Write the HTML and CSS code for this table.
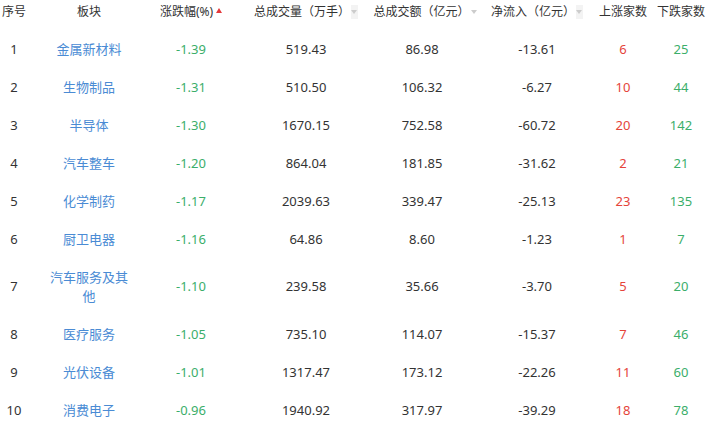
FILE: index.html
```html
<!DOCTYPE html>
<html lang="zh-CN">
<head>
<meta charset="utf-8">
<title>板块资金</title>
<link rel="stylesheet" href="styles.css">
</head>
<body>
<div class="table">
  <div class="row head">
    <div class="cell c0">序号</div>
    <div class="cell c1">板块</div>
    <div class="cell c2">涨跌幅(%)<span class="sort-up"></span></div>
    <div class="cell c3">总成交量（万手）<span class="sort-down"></span></div>
    <div class="cell c4">总成交额（亿元）<span class="sort-down"></span></div>
    <div class="cell c5">净流入（亿元）<span class="sort-down"></span></div>
    <div class="cell c6">上涨家数</div>
    <div class="cell c7">下跌家数</div>
  </div>
  <div class="row">
    <div class="cell c0">1</div><div class="cell c1"><a class="name">金属新材料</a></div><div class="cell c2 down">-1.39</div><div class="cell c3">519.43</div><div class="cell c4">86.98</div><div class="cell c5">-13.61</div><div class="cell c6 up">6</div><div class="cell c7 down">25</div>
  </div>
  <div class="row">
    <div class="cell c0">2</div><div class="cell c1"><a class="name">生物制品</a></div><div class="cell c2 down">-1.31</div><div class="cell c3">510.50</div><div class="cell c4">106.32</div><div class="cell c5">-6.27</div><div class="cell c6 up">10</div><div class="cell c7 down">44</div>
  </div>
  <div class="row">
    <div class="cell c0">3</div><div class="cell c1"><a class="name">半导体</a></div><div class="cell c2 down">-1.30</div><div class="cell c3">1670.15</div><div class="cell c4">752.58</div><div class="cell c5">-60.72</div><div class="cell c6 up">20</div><div class="cell c7 down">142</div>
  </div>
  <div class="row">
    <div class="cell c0">4</div><div class="cell c1"><a class="name">汽车整车</a></div><div class="cell c2 down">-1.20</div><div class="cell c3">864.04</div><div class="cell c4">181.85</div><div class="cell c5">-31.62</div><div class="cell c6 up">2</div><div class="cell c7 down">21</div>
  </div>
  <div class="row">
    <div class="cell c0">5</div><div class="cell c1"><a class="name">化学制药</a></div><div class="cell c2 down">-1.17</div><div class="cell c3">2039.63</div><div class="cell c4">339.47</div><div class="cell c5">-25.13</div><div class="cell c6 up">23</div><div class="cell c7 down">135</div>
  </div>
  <div class="row">
    <div class="cell c0">6</div><div class="cell c1"><a class="name">厨卫电器</a></div><div class="cell c2 down">-1.16</div><div class="cell c3">64.86</div><div class="cell c4">8.60</div><div class="cell c5">-1.23</div><div class="cell c6 up">1</div><div class="cell c7 down">7</div>
  </div>
  <div class="row">
    <div class="cell c0">7</div><div class="cell c1"><a class="name">汽车服务及其他</a></div><div class="cell c2 down">-1.10</div><div class="cell c3">239.58</div><div class="cell c4">35.66</div><div class="cell c5">-3.70</div><div class="cell c6 up">5</div><div class="cell c7 down">20</div>
  </div>
  <div class="row">
    <div class="cell c0">8</div><div class="cell c1"><a class="name">医疗服务</a></div><div class="cell c2 down">-1.05</div><div class="cell c3">735.10</div><div class="cell c4">114.07</div><div class="cell c5">-15.37</div><div class="cell c6 up">7</div><div class="cell c7 down">46</div>
  </div>
  <div class="row">
    <div class="cell c0">9</div><div class="cell c1"><a class="name">光伏设备</a></div><div class="cell c2 down">-1.01</div><div class="cell c3">1317.47</div><div class="cell c4">173.12</div><div class="cell c5">-22.26</div><div class="cell c6 up">11</div><div class="cell c7 down">60</div>
  </div>
  <div class="row">
    <div class="cell c0">10</div><div class="cell c1"><a class="name">消费电子</a></div><div class="cell c2 down">-0.96</div><div class="cell c3">1940.92</div><div class="cell c4">317.97</div><div class="cell c5">-39.29</div><div class="cell c6 up">18</div><div class="cell c7 down">78</div>
  </div>
</div>
</body>
</html>
```
FILE: styles.css
```css
html, body {
  margin: 0;
  padding: 0;
  background: #ffffff;
}
body {
  font-family: "Noto Sans", "Noto Sans CJK SC", sans-serif;
  color: #333333;
  font-size: 13px;
}
.table {
  width: 707px;
}
.row {
  display: grid;
  grid-template-columns: 28px 122px 82px 148px 84px 146px 26px 71px;
  align-items: center;
}
.cell {
  min-width: 0;
  display: flex;
  justify-content: center;
  align-items: center;
  text-align: center;
  white-space: nowrap;
  padding: 9.5px 0;
  line-height: 19px;
}
.head {
  height: 24px;
  margin-bottom: 6px;
  font-size: 12px;
}
.head .cell {
  padding-top: 0;
  padding-bottom: 0;
  line-height: 22px;
}
.c1 {
  padding-left: 20px;
  padding-right: 20px;
  white-space: normal;
}
.c7 {
  padding-left: 19px;
}
.name {
  color: #4a8bd4;
  text-decoration: none;
  cursor: pointer;
}
.up {
  color: #e5443a;
}
.down {
  color: #3bae6a;
}
.sort-up {
  width: 0;
  height: 0;
  margin-left: 3px;
  margin-top: -3px;
  border-left: 3.5px solid transparent;
  border-right: 3.5px solid transparent;
  border-bottom: 5px solid #e4393c;
}
.sort-down {
  position: relative;
  width: 7px;
  height: 14px;
  margin-left: 1px;
  background: #f3f3f3;
}
.sort-down::after {
  content: "";
  position: absolute;
  left: 0;
  top: 5px;
  border-left: 3.5px solid transparent;
  border-right: 3.5px solid transparent;
  border-top: 4px solid #cccccc;
}
```
